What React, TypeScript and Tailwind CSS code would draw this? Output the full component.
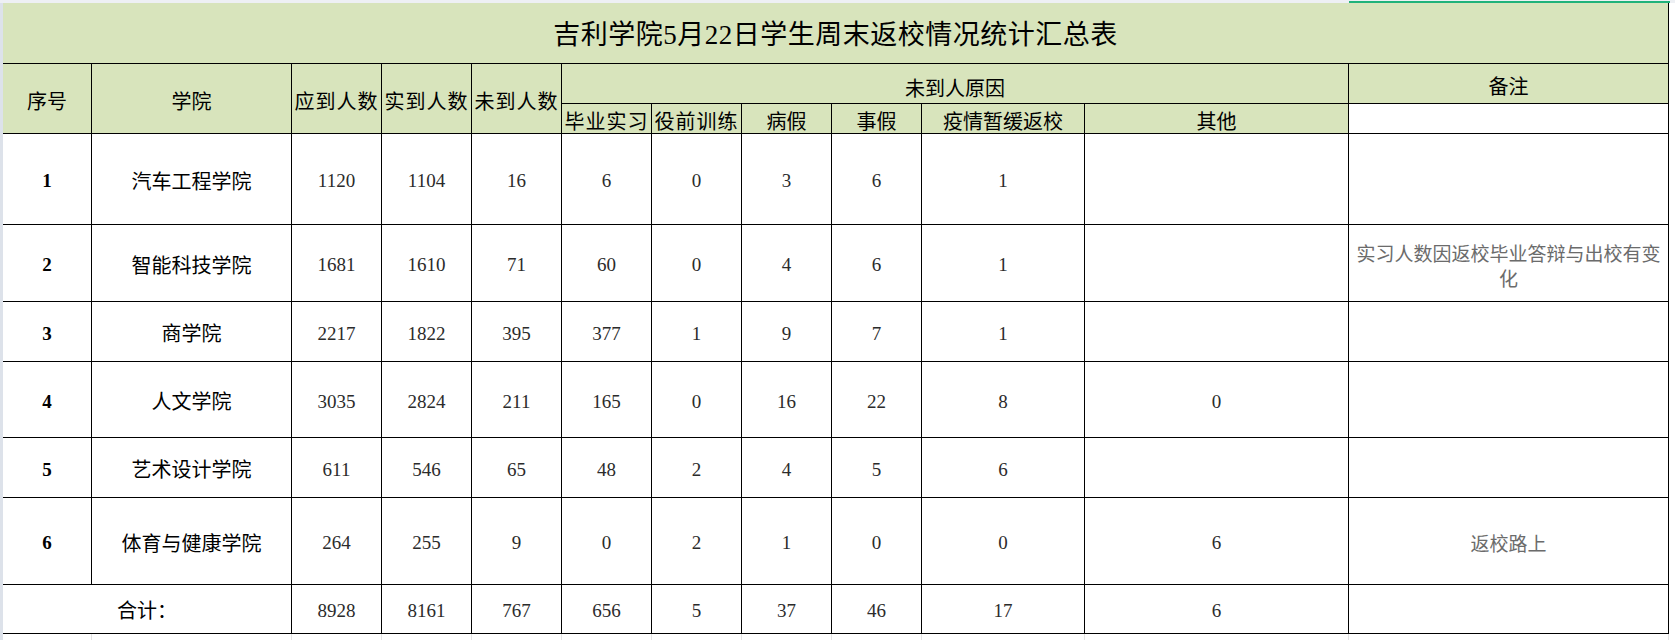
import React from 'react';

type Row = {
  no: string;
  name: string;
  expected: string;
  actual: string;
  absent: string;
  reasons: string[];
  note?: React.ReactNode;
};

const ROWS: Row[] = [
  { no: '1', name: '汽车工程学院', expected: '1120', actual: '1104', absent: '16', reasons: ['6', '0', '3', '6', '1', ''] },
  {
    no: '2',
    name: '智能科技学院',
    expected: '1681',
    actual: '1610',
    absent: '71',
    reasons: ['60', '0', '4', '6', '1', ''],
    note: (
      <>
        实习人数因返校毕业答辩与出校有变
        <br />化
      </>
    ),
  },
  { no: '3', name: '商学院', expected: '2217', actual: '1822', absent: '395', reasons: ['377', '1', '9', '7', '1', ''] },
  { no: '4', name: '人文学院', expected: '3035', actual: '2824', absent: '211', reasons: ['165', '0', '16', '22', '8', '0'] },
  { no: '5', name: '艺术设计学院', expected: '611', actual: '546', absent: '65', reasons: ['48', '2', '4', '5', '6', ''] },
  { no: '6', name: '体育与健康学院', expected: '264', actual: '255', absent: '9', reasons: ['0', '2', '1', '0', '0', '6'], note: '返校路上' },
];

const TOTALS = ['8928', '8161', '767', '656', '5', '37', '46', '17', '6', ''];

const SUB_HEADERS = ['毕业实习', '役前训练', '病假', '事假', '疫情暂缓返校', '其他'];

// column tracks follow the sheet's column widths
const COLS = 'grid-cols-[89px_200px_90px_90px_90px_90px_90px_90px_90px_163px_264px_320px]';

const cell = 'flex items-center justify-center border-r border-b border-black text-center';
const head = `${cell} bg-[#d8e4bc] text-black text-[20px]`;
const num = `${cell} text-[19px] text-[#2b2b2b] pt-[5px]`;

export default function App() {
  return (
    <div className="w-[1675px] h-[640px] overflow-hidden bg-white font-['Liberation_Serif','Noto_Sans_CJK_SC',serif]">
      {/* sheet strip above the table */}
      <div className="flex h-[3px] bg-[#eef0f4]">
        <div className="w-[1349px]" />
        <div className="w-[321px] pt-[1px]">
          <div className="h-[2px] bg-[#20b27a]" />
        </div>
      </div>

      <div className="flex">
        <div className="w-[3px] bg-[#dde2ea]" />

        <div className={`grid ${COLS} grid-rows-[61px_40px_30px_91px_77px_60px_76px_60px_87px_49px]`}>
          <div className={`${head} col-span-12 text-[27px] tracking-[0.5px] pt-[5px]`}>
            吉利学院5月22日学生周末返校情况统计汇总表
          </div>

          <div className={`${head} row-span-2 pt-[7px]`}>序号</div>
          <div className={`${head} row-span-2 pt-[7px]`}>学院</div>
          <div className={`${head} row-span-2 pt-[7px] tracking-[1px]`}>应到人数</div>
          <div className={`${head} row-span-2 pt-[7px] tracking-[1px]`}>实到人数</div>
          <div className={`${head} row-span-2 pt-[7px] tracking-[1px]`}>未到人数</div>
          <div className={`${head} col-span-6 pt-[10px]`}>未到人原因</div>
          <div className={`${head} pt-[6px]`}>备注</div>

          {SUB_HEADERS.map((h) => (
            <div key={h} className={`${head} pt-[6px] ${h.length === 4 ? 'tracking-[1px]' : ''}`}>
              {h}
            </div>
          ))}
          <div className={`${cell} bg-white`} />

          {ROWS.map((r) => (
            <React.Fragment key={r.no}>
              <div className={`${cell} text-[19px] font-bold text-black pt-[5px]`}>{r.no}</div>
              <div className={`${cell} text-[20px] text-black pt-[5px]`}>{r.name}</div>
              <div className={num}>{r.expected}</div>
              <div className={num}>{r.actual}</div>
              <div className={num}>{r.absent}</div>
              {r.reasons.map((v, i) => (
                <div key={i} className={num}>
                  {v}
                </div>
              ))}
              <div className={`${cell} text-[19px] leading-[25px] text-[#6b6b6b] font-['Noto_Sans_CJK_SC',sans-serif] pt-[3px]`}>
                {r.note}
              </div>
            </React.Fragment>
          ))}

          <div className={`${cell} col-span-2 text-[20px] text-black pt-[4px]`}>合计：</div>
          {TOTALS.map((v, i) => (
            <div key={i} className={`${num} pt-[3px]`}>
              {v}
            </div>
          ))}
        </div>
      </div>

      {/* empty sheet cells under the table */}
      <div className="flex h-[6px]">
        <div className="w-[3px] bg-[#dde2ea]" />
        <div className={`grid ${COLS}`}>
          {Array.from({ length: 12 }).map((_, i) => (
            <div key={i} className="border-r border-[#e3e3e3]" />
          ))}
        </div>
      </div>
    </div>
  );
}
